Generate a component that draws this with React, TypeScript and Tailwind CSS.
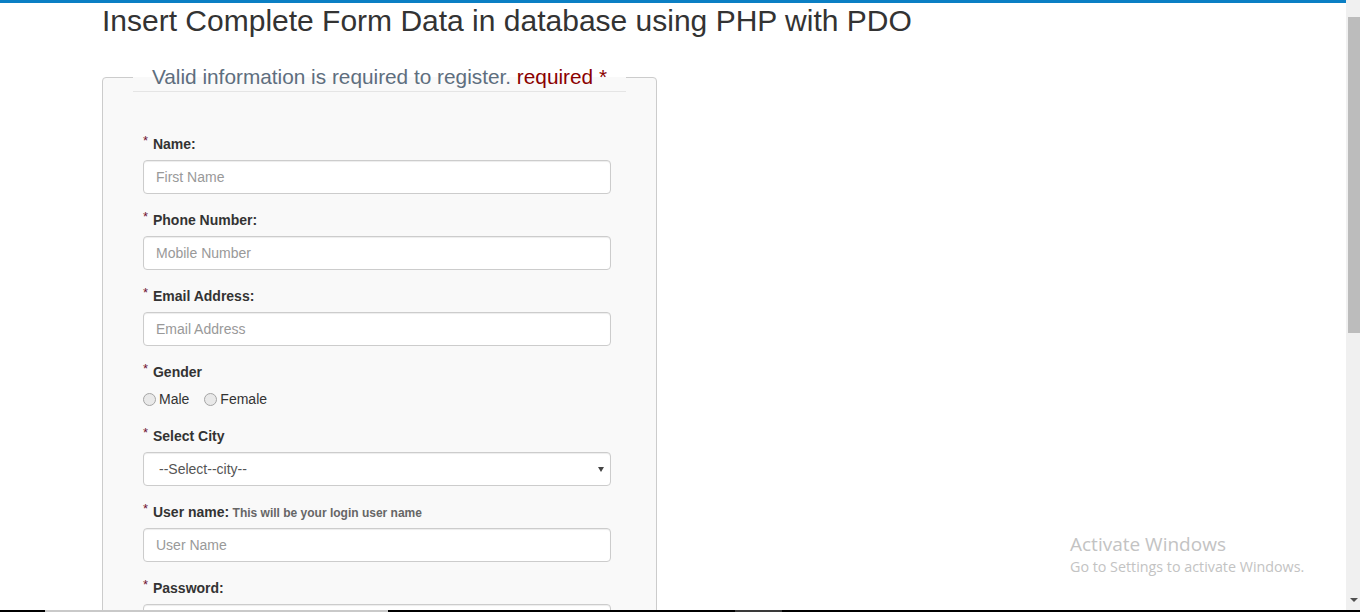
import React from 'react'

function Label({ text, hint }: { text: string; hint?: string }) {
  return (
    <label className="block mb-[6px] h-[20px] text-[14px] leading-[20px] font-bold text-[#333]">
      <span className="relative top-[-4px] mr-[1px] text-[13px] leading-none font-normal text-[#6e1430]">*</span> {text}
      {hint && <span className="text-[12px] leading-none text-[#666]"> {hint}</span>}
    </label>
  )
}

function TextField({ label, placeholder, hint, type = 'text' }: { label: string; placeholder: string; hint?: string; type?: string }) {
  return (
    <div className="mb-[16px]">
      <Label text={label} hint={hint} />
      <input
        type={type}
        placeholder={placeholder}
        className="block w-[468px] h-[34px] rounded-[4px] border border-[#ccc] bg-white px-[12px] text-[14px] text-[#555] placeholder:text-[#999] shadow-[inset_0_1px_1px_rgba(0,0,0,0.075)] outline-none"
      />
    </div>
  )
}

function Radio({ label }: { label: string }) {
  return (
    <label className="flex items-center gap-[3px] text-[14px] leading-[20px] text-[#333]">
      <input
        type="radio"
        name="gender"
        className="m-0 h-[13px] w-[13px] appearance-none rounded-full border border-[#a5a5a5] bg-[#e9e9e9]"
      />
      {label}
    </label>
  )
}

export default function App() {
  return (
    <div className="flex h-[612px] w-[1360px] flex-col overflow-hidden bg-white font-['Liberation_Sans',Arial,sans-serif] text-[#333]">
      <div className="flex min-h-0 flex-1">
        <div className="relative min-w-0 flex-1 overflow-hidden">
          <div className="h-[3px] bg-[#0a7fc4]" />
          <div className="mx-auto w-[1172px] px-[15px]">
            <h1 className="mt-[1px] text-[30px] font-normal leading-[1.1] text-[#333]">
              Insert Complete Form Data in database using PHP with PDO
            </h1>

            <fieldset className="mt-[25px] w-[555px] rounded-[4px] border border-[#ccc] bg-[#f9f9f9] pb-4">
              <legend className="ml-[30px] border-b border-[#e5e5e5]">
                <div className="w-[493px] text-center text-[20.8px] leading-[29px] text-[#5e6e7e]">
                  Valid information is required to register. <span className="text-[#8b0000]">required *</span>
                </div>
              </legend>

              <div className="pl-[40px] pt-[42px]">
                <TextField label="Name:" placeholder="First Name" />
                <TextField label="Phone Number:" placeholder="Mobile Number" />
                <TextField label="Email Address:" placeholder="Email Address" />

                <div className="mb-[17px]">
                  <Label text="Gender" />
                  <div className="flex h-[21px] items-center gap-[15px] pt-[1px]">
                    <Radio label="Male" />
                    <Radio label="Female" />
                  </div>
                </div>

                <div className="mb-[16px]">
                  <Label text="Select City" />
                  <div className="relative w-[468px]">
                    <select className="block h-[34px] w-full appearance-none rounded-[4px] border border-[#ccc] bg-white pl-[15px] text-[14px] text-[#555] shadow-[inset_0_1px_1px_rgba(0,0,0,0.075)] outline-none">
                      <option>--Select--city--</option>
                    </select>
                    <span className="pointer-events-none absolute right-[7px] top-[15px] h-0 w-0 border-x-[3.5px] border-t-[5px] border-x-transparent border-t-[#444]" />
                  </div>
                </div>

                <TextField label="User name:" hint="This will be your login user name" placeholder="User Name" />
                <TextField label="Password:" placeholder="Password" type="password" />
              </div>
            </fieldset>
          </div>

          <div className="absolute left-[1070px] top-[531px] font-['Open_Sans','Noto_Sans',sans-serif] text-[#c3c3c3]">
            <div className="text-[19px] leading-[26px]">Activate Windows</div>
            <div className="text-[14.3px] leading-[20px]">Go to Settings to activate Windows.</div>
          </div>
        </div>

        <div className="relative w-[14px] bg-[#f0f0f0]">
          <div className="absolute left-[2px] right-0 top-[17px] h-[316px] bg-[#bcbcbc]" />
          <span className="absolute bottom-[8px] left-[4px] h-0 w-0 border-x-[4px] border-t-[4px] border-x-transparent border-t-[#505050]" />
        </div>
      </div>

      <div className="flex h-[2px]">
        <div className="w-[45px] bg-black" />
        <div className="w-[343px] bg-[#c9c9c9]" />
        <div className="w-[347px] bg-black" />
        <div className="w-[47px] bg-[#3a3a3a]" />
        <div className="flex-1 bg-black" />
      </div>
    </div>
  )
}
